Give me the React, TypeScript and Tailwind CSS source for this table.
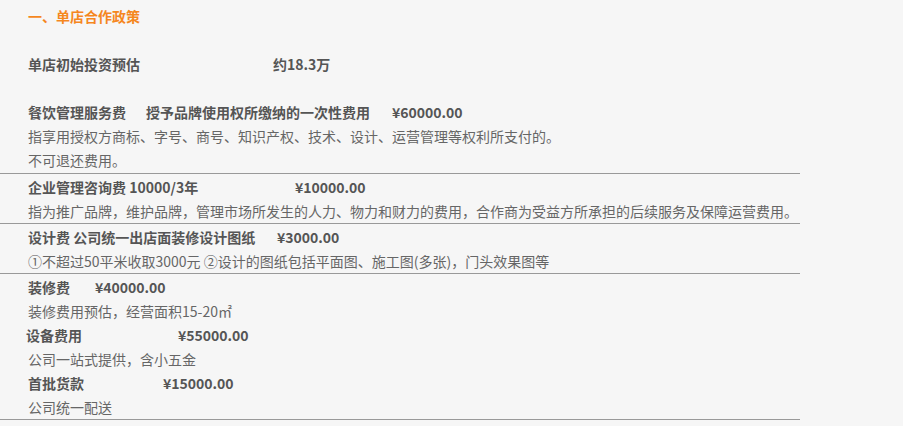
import React from 'react';

// 费用条目：标题行（粗体）+ 说明行
type Fee = {
    label: string;
    amount: string;
    notes: string[];
};

const groups: Fee[][] = [
    [
        {
            label: '企业管理咨询费 10000/3年',
            amount: '¥10000.00',
            notes: ['指为推广品牌，维护品牌，管理市场所发生的人力、物力和财力的费用，合作商为受益方所承担的后续服务及保障运营费用。'],
        },
    ],
    [
        {
            label: '设计费 公司统一出店面装修设计图纸',
            amount: '¥3000.00',
            notes: ['①不超过50平米收取3000元 ②设计的图纸包括平面图、施工图(多张)，门头效果图等'],
        },
    ],
    [
        { label: '装修费', amount: '¥40000.00', notes: ['装修费用预估，经营面积15-20㎡'] },
        { label: '设备费用', amount: '¥55000.00', notes: ['公司一站式提供，含小五金'] },
        { label: '首批货款', amount: '¥15000.00', notes: ['公司统一配送'] },
    ],
];

// 金额起始位置（相对左侧内边距），按截图量取
const amountLeft: Record<string, string> = {
    '企业管理咨询费 10000/3年': 'w-[267px]',
    '设计费 公司统一出店面装修设计图纸': 'w-[249px]',
    '装修费': 'w-[67px]',
    '设备费用': 'w-[152px] -ml-[2px]',
    '首批货款': 'w-[135px]',
};

export default function App() {
    return (
        <div
            className="min-h-[426px] w-[903px] bg-[#f6f6f6] pt-[4px] text-[14px] leading-[24px] text-[#666]"
            style={{ fontFamily: '"Microsoft YaHei", "Noto Sans CJK SC", "Noto Sans", sans-serif' }}
        >
            <div className="w-[800px]">
                <div className="border-b border-[#999] pb-[1px] pl-[28px]">
                    <p className="font-bold text-[#f5871f]">一、单店合作政策</p>
                    <p>&nbsp;</p>
                    <p className="flex font-bold text-[#555]">
                        <span className="w-[245px]">单店初始投资预估</span>
                        <span>约18.3万</span>
                    </p>
                    <p>&nbsp;</p>
                    <p className="flex font-bold text-[#555]">
                        <span className="w-[118px]">餐饮管理服务费</span>
                        <span className="w-[246px]">授予品牌使用权所缴纳的一次性费用</span>
                        <span>¥60000.00</span>
                    </p>
                    <p>指享用授权方商标、字号、商号、知识产权、技术、设计、运营管理等权利所支付的。</p>
                    <p>不可退还费用。</p>
                </div>

                {groups.map((group, gi) => (
                    <div key={gi} className="border-b border-[#999] pl-[28px] pt-[1px]">
                        {group.map(fee => (
                            <div key={fee.label}>
                                <p className="flex whitespace-nowrap font-bold text-[#555]">
                                    <span className={amountLeft[fee.label]}>{fee.label}</span>
                                    <span>{fee.amount}</span>
                                </p>
                                {fee.notes.map(n => (
                                    <p key={n} className="whitespace-nowrap">{n}</p>
                                ))}
                            </div>
                        ))}
                    </div>
                ))}
            </div>
        </div>
    );
}
